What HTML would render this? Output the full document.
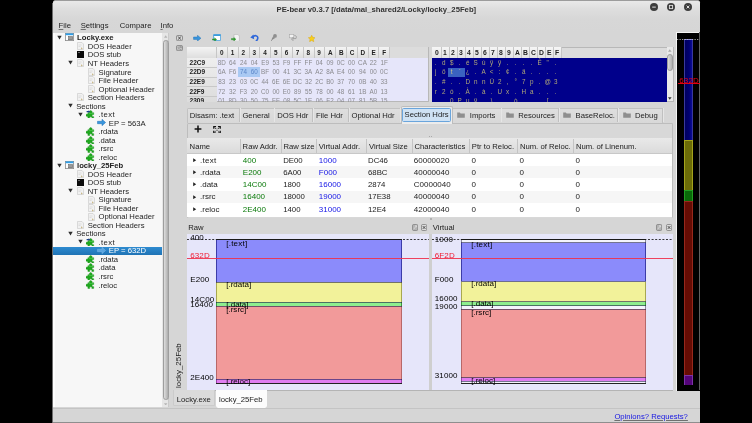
<!DOCTYPE html><html><head><meta charset='utf-8'><title>PE-bear</title><style>
*{box-sizing:border-box;margin:0;padding:0}
html,body{width:752px;height:423px;overflow:hidden;background:#000}
body{will-change:transform}
body{font-family:"Liberation Sans",sans-serif;font-size:7.7px;color:#1e1e1e;position:relative;line-height:1}
.a{position:absolute}
.t{position:absolute;white-space:nowrap;line-height:10px;height:10px}
.b{font-weight:bold}
u{text-decoration-color:rgba(30,30,30,.55);text-underline-offset:1px}
#win{position:absolute;left:52.6px;top:0.3px;width:647.3px;height:422.7px;border-top:0.7px solid #9c9c9c;background:#d6d6d6;border-radius:2.5px 2.5px 0 0;overflow:hidden}
#title{position:absolute;left:0;top:0;width:647px;height:31px;background:linear-gradient(#e9e9e9,#dedede 8px,#d7d7d7 18px,#d6d6d6)}
</style></head><body>
<div class='a' style='left:52px;top:3px;width:1px;height:420px;background:#6e6e6e'></div>
<div id='win'><div id='title'></div></div>
<div class='t b' style='left:276.6px;top:5px;color:#333'>PE-bear v0.3.7 [/data/mal_shared2/Locky/locky_25Feb]</div>
<svg class='a' style='left:650.1px;top:3.1px' width='8' height='8' viewBox='0 0 8 8'><circle cx='4' cy='4' r='4' fill='#3d3d3d'/><rect x='2.2' y='3.6' width='3.6' height='1' fill='#ddd'/></svg>
<svg class='a' style='left:667.0px;top:3.1px' width='8' height='8' viewBox='0 0 8 8'><circle cx='4' cy='4' r='4' fill='#3d3d3d'/><rect x='2.4' y='2.4' width='3.2' height='3.2' fill='none' stroke='#ddd' stroke-width='0.9'/></svg>
<svg class='a' style='left:684.0px;top:3.1px' width='8' height='8' viewBox='0 0 8 8'><circle cx='4' cy='4' r='4' fill='#3d3d3d'/><path d='M2.6 2.6L5.4 5.4M5.4 2.6L2.6 5.4' stroke='#ddd' stroke-width='1'/></svg>
<div class='t ' style='left:58.6px;top:21px;'><u>F</u>ile</div>
<div class='t ' style='left:80.7px;top:21px;'><u>S</u>ettings</div>
<div class='t ' style='left:119.8px;top:21px;'>Compare</div>
<div class='t ' style='left:160.5px;top:21px;'><u>I</u>nfo</div>
<div class='a' style='left:53.0px;top:32.8px;width:116.4px;height:374.7px;background:#f7f7f7;border-left:2px solid #fefefe'></div>
<div class='a' style='left:162.4px;top:32.8px;width:7.0px;height:374.7px;background:#e6e6e6;border-right:0.6px solid #c9c9c9'></div>
<div class='a' style='left:162.7px;top:40.2px;width:6.4px;height:360.0px;background:linear-gradient(90deg,#dedede,#cdcdcd 35%,#b6b6b6 85%,#a4a4a4);border-radius:2.8px;border:0.5px solid #9e9e9e'></div>
<svg class='a' style='left:164.2px;top:35.4px' width='3.4' height='2.8' viewBox='0 0 4 3'><path d='M0 3L2 0L4 3z' fill='#b5b5b5'/></svg>
<svg class='a' style='left:164.2px;top:402.6px' width='3.4' height='2.8' viewBox='0 0 4 3'><path d='M0 0L2 3L4 0z' fill='#b5b5b5'/></svg>
<svg class='a' style='left:57.0px;top:34.9px' width='5' height='5' viewBox='0 0 5 5'><path d='M0.3 0.8h4.4L2.5 4.4z' fill='#2e2e2e'/></svg>
<svg class='a' style='left:65.3px;top:33.2px' width='9' height='8' viewBox='0 0 9 8'><rect x='0.4' y='0.4' width='8.2' height='7.2' fill='#fdfdfd' stroke='#8a8a8a' stroke-width='0.8'/><rect x='0.6' y='0.4' width='7.8' height='1.8' fill='#2e9fea'/><rect x='3.6' y='3.6' width='4' height='3.2' fill='#9a9a9a' stroke='#555' stroke-width='0.5'/></svg>
<div class='t b' style='left:77.0px;top:33px;color:#222'>Locky.exe</div>
<svg class='a' style='left:77.0px;top:42.2px' width='7' height='8' viewBox='0 0 7 8'><path d='M0.5 0.5h4.5l1.5 1.5v5.5h-6z' fill='#f1f1f1' stroke='#cdcdcd' stroke-width='0.7'/><path d='M1.5 3h3M1.5 4.5h2' stroke='#d4d4d4' stroke-width='0.7'/><path d='M4 5.2l1.8 1.2l-1.8 1z' fill='#c9b98a'/></svg>
<div class='t ' style='left:87.7px;top:42px;'>DOS Header</div>
<svg class='a' style='left:77.0px;top:50.9px' width='7' height='7' viewBox='0 0 7 7'><rect width='7' height='7' fill='#0a0a0a'/><path d='M1 1.5h2' stroke='#aaa' stroke-width='0.6'/></svg>
<div class='t ' style='left:87.7px;top:50px;'>DOS stub</div>
<svg class='a' style='left:68.3px;top:60.4px' width='5' height='5' viewBox='0 0 5 5'><path d='M0.3 0.8h4.4L2.5 4.4z' fill='#2e2e2e'/></svg>
<svg class='a' style='left:77.0px;top:59.2px' width='7' height='8' viewBox='0 0 7 8'><path d='M0.5 0.5h4.5l1.5 1.5v5.5h-6z' fill='#f1f1f1' stroke='#cdcdcd' stroke-width='0.7'/><path d='M1.5 3h3M1.5 4.5h2' stroke='#d4d4d4' stroke-width='0.7'/><path d='M4 5.2l1.8 1.2l-1.8 1z' fill='#c9b98a'/></svg>
<div class='t ' style='left:87.7px;top:59px;'>NT Headers</div>
<svg class='a' style='left:88.0px;top:67.7px' width='7' height='8' viewBox='0 0 7 8'><path d='M0.5 0.5h4.5l1.5 1.5v5.5h-6z' fill='#f1f1f1' stroke='#cdcdcd' stroke-width='0.7'/><path d='M1.5 3h3M1.5 4.5h2' stroke='#d4d4d4' stroke-width='0.7'/><path d='M4 5.2l1.8 1.2l-1.8 1z' fill='#c9b98a'/></svg>
<div class='t ' style='left:98.6px;top:68px;'>Signature</div>
<svg class='a' style='left:88.0px;top:76.2px' width='7' height='8' viewBox='0 0 7 8'><path d='M0.5 0.5h4.5l1.5 1.5v5.5h-6z' fill='#f1f1f1' stroke='#cdcdcd' stroke-width='0.7'/><path d='M1.5 3h3M1.5 4.5h2' stroke='#d4d4d4' stroke-width='0.7'/><path d='M4 5.2l1.8 1.2l-1.8 1z' fill='#c9b98a'/></svg>
<div class='t ' style='left:98.6px;top:76px;'>File Header</div>
<svg class='a' style='left:88.0px;top:84.8px' width='7' height='8' viewBox='0 0 7 8'><path d='M0.5 0.5h4.5l1.5 1.5v5.5h-6z' fill='#f1f1f1' stroke='#cdcdcd' stroke-width='0.7'/><path d='M1.5 3h3M1.5 4.5h2' stroke='#d4d4d4' stroke-width='0.7'/><path d='M4 5.2l1.8 1.2l-1.8 1z' fill='#c9b98a'/></svg>
<div class='t ' style='left:98.6px;top:85px;'>Optional Header</div>
<svg class='a' style='left:77.0px;top:93.3px' width='7' height='8' viewBox='0 0 7 8'><path d='M0.5 0.5h4.5l1.5 1.5v5.5h-6z' fill='#f1f1f1' stroke='#cdcdcd' stroke-width='0.7'/><path d='M1.5 3h3M1.5 4.5h2' stroke='#d4d4d4' stroke-width='0.7'/><path d='M4 5.2l1.8 1.2l-1.8 1z' fill='#c9b98a'/></svg>
<div class='t ' style='left:87.7px;top:93px;'>Section Headers</div>
<svg class='a' style='left:68.3px;top:103.0px' width='5' height='5' viewBox='0 0 5 5'><path d='M0.3 0.8h4.4L2.5 4.4z' fill='#2e2e2e'/></svg>
<div class='t ' style='left:76.2px;top:102px;'>Sections</div>
<svg class='a' style='left:78.4px;top:111.5px' width='5' height='5' viewBox='0 0 5 5'><path d='M0.3 0.8h4.4L2.5 4.4z' fill='#2e2e2e'/></svg>
<svg class='a' style='left:86.4px;top:109.9px' width='8.4' height='8.6' viewBox='0 0 8.4 8.6'><path d='M1.9 2.7h1.7a1.35 1.35 0 1 1 2.2 0h1.9v1.9a1.1 1.1 0 1 0 0 2v1.8h-1.9a1.1 1.1 0 1 0 -2 0h-1.9v-2.2a1.25 1.25 0 1 1 0-1.9z' fill='#1fa81f' stroke='#128a12' stroke-width='0.4'/><path d='M2.6 3.4h4.2v1' stroke='#5fd45f' stroke-width='0.6' fill='none'/><path d='M0.6 1h2l0-0.8l1.6 1.4l-1.6 1.4v-0.8h-2z' fill='#1b3f8a'/></svg>
<div class='t ' style='left:98.4px;top:110px;letter-spacing:0.45px'>.text</div>
<svg class='a' style='left:97.3px;top:119.3px' width='9' height='7' viewBox='0 0 9 7'><path d='M0.5 2.3h4.5v-2l3.6 3.2l-3.6 3.2v-2h-4.5z' fill='#3a96dd' stroke='#1c6fb5' stroke-width='0.5'/></svg>
<div class='t ' style='left:108.8px;top:119px;'>EP = 563A</div>
<svg class='a' style='left:86.4px;top:127.0px' width='8.4' height='8.6' viewBox='0 0 8.4 8.6'><path d='M1.9 2.7h1.7a1.35 1.35 0 1 1 2.2 0h1.9v1.9a1.1 1.1 0 1 0 0 2v1.8h-1.9a1.1 1.1 0 1 0 -2 0h-1.9v-2.2a1.25 1.25 0 1 1 0-1.9z' fill='#1fa81f' stroke='#128a12' stroke-width='0.4'/><path d='M2.6 3.4h4.2v1' stroke='#5fd45f' stroke-width='0.6' fill='none'/></svg>
<div class='t ' style='left:98.4px;top:127px;'>.rdata</div>
<svg class='a' style='left:86.4px;top:135.5px' width='8.4' height='8.6' viewBox='0 0 8.4 8.6'><path d='M1.9 2.7h1.7a1.35 1.35 0 1 1 2.2 0h1.9v1.9a1.1 1.1 0 1 0 0 2v1.8h-1.9a1.1 1.1 0 1 0 -2 0h-1.9v-2.2a1.25 1.25 0 1 1 0-1.9z' fill='#1fa81f' stroke='#128a12' stroke-width='0.4'/><path d='M2.6 3.4h4.2v1' stroke='#5fd45f' stroke-width='0.6' fill='none'/></svg>
<div class='t ' style='left:98.4px;top:136px;'>.data</div>
<svg class='a' style='left:86.4px;top:144.0px' width='8.4' height='8.6' viewBox='0 0 8.4 8.6'><path d='M1.9 2.7h1.7a1.35 1.35 0 1 1 2.2 0h1.9v1.9a1.1 1.1 0 1 0 0 2v1.8h-1.9a1.1 1.1 0 1 0 -2 0h-1.9v-2.2a1.25 1.25 0 1 1 0-1.9z' fill='#1fa81f' stroke='#128a12' stroke-width='0.4'/><path d='M2.6 3.4h4.2v1' stroke='#5fd45f' stroke-width='0.6' fill='none'/></svg>
<div class='t ' style='left:98.4px;top:144px;'>.rsrc</div>
<svg class='a' style='left:86.4px;top:152.5px' width='8.4' height='8.6' viewBox='0 0 8.4 8.6'><path d='M1.9 2.7h1.7a1.35 1.35 0 1 1 2.2 0h1.9v1.9a1.1 1.1 0 1 0 0 2v1.8h-1.9a1.1 1.1 0 1 0 -2 0h-1.9v-2.2a1.25 1.25 0 1 1 0-1.9z' fill='#1fa81f' stroke='#128a12' stroke-width='0.4'/><path d='M2.6 3.4h4.2v1' stroke='#5fd45f' stroke-width='0.6' fill='none'/></svg>
<div class='t ' style='left:98.4px;top:153px;'>.reloc</div>
<svg class='a' style='left:57.0px;top:162.6px' width='5' height='5' viewBox='0 0 5 5'><path d='M0.3 0.8h4.4L2.5 4.4z' fill='#2e2e2e'/></svg>
<svg class='a' style='left:65.3px;top:161.0px' width='9' height='8' viewBox='0 0 9 8'><rect x='0.4' y='0.4' width='8.2' height='7.2' fill='#fdfdfd' stroke='#8a8a8a' stroke-width='0.8'/><rect x='0.6' y='0.4' width='7.8' height='1.8' fill='#2e9fea'/><rect x='3.6' y='3.6' width='4' height='3.2' fill='#9a9a9a' stroke='#555' stroke-width='0.5'/></svg>
<div class='t b' style='left:77.0px;top:161px;color:#222'>locky_25Feb</div>
<svg class='a' style='left:77.0px;top:170.0px' width='7' height='8' viewBox='0 0 7 8'><path d='M0.5 0.5h4.5l1.5 1.5v5.5h-6z' fill='#f1f1f1' stroke='#cdcdcd' stroke-width='0.7'/><path d='M1.5 3h3M1.5 4.5h2' stroke='#d4d4d4' stroke-width='0.7'/><path d='M4 5.2l1.8 1.2l-1.8 1z' fill='#c9b98a'/></svg>
<div class='t ' style='left:87.7px;top:170px;'>DOS Header</div>
<svg class='a' style='left:77.0px;top:178.7px' width='7' height='7' viewBox='0 0 7 7'><rect width='7' height='7' fill='#0a0a0a'/><path d='M1 1.5h2' stroke='#aaa' stroke-width='0.6'/></svg>
<div class='t ' style='left:87.7px;top:178px;'>DOS stub</div>
<svg class='a' style='left:68.3px;top:188.2px' width='5' height='5' viewBox='0 0 5 5'><path d='M0.3 0.8h4.4L2.5 4.4z' fill='#2e2e2e'/></svg>
<svg class='a' style='left:77.0px;top:187.0px' width='7' height='8' viewBox='0 0 7 8'><path d='M0.5 0.5h4.5l1.5 1.5v5.5h-6z' fill='#f1f1f1' stroke='#cdcdcd' stroke-width='0.7'/><path d='M1.5 3h3M1.5 4.5h2' stroke='#d4d4d4' stroke-width='0.7'/><path d='M4 5.2l1.8 1.2l-1.8 1z' fill='#c9b98a'/></svg>
<div class='t ' style='left:87.7px;top:187px;'>NT Headers</div>
<svg class='a' style='left:88.0px;top:195.5px' width='7' height='8' viewBox='0 0 7 8'><path d='M0.5 0.5h4.5l1.5 1.5v5.5h-6z' fill='#f1f1f1' stroke='#cdcdcd' stroke-width='0.7'/><path d='M1.5 3h3M1.5 4.5h2' stroke='#d4d4d4' stroke-width='0.7'/><path d='M4 5.2l1.8 1.2l-1.8 1z' fill='#c9b98a'/></svg>
<div class='t ' style='left:98.6px;top:195px;'>Signature</div>
<svg class='a' style='left:88.0px;top:204.0px' width='7' height='8' viewBox='0 0 7 8'><path d='M0.5 0.5h4.5l1.5 1.5v5.5h-6z' fill='#f1f1f1' stroke='#cdcdcd' stroke-width='0.7'/><path d='M1.5 3h3M1.5 4.5h2' stroke='#d4d4d4' stroke-width='0.7'/><path d='M4 5.2l1.8 1.2l-1.8 1z' fill='#c9b98a'/></svg>
<div class='t ' style='left:98.6px;top:204px;'>File Header</div>
<svg class='a' style='left:88.0px;top:212.6px' width='7' height='8' viewBox='0 0 7 8'><path d='M0.5 0.5h4.5l1.5 1.5v5.5h-6z' fill='#f1f1f1' stroke='#cdcdcd' stroke-width='0.7'/><path d='M1.5 3h3M1.5 4.5h2' stroke='#d4d4d4' stroke-width='0.7'/><path d='M4 5.2l1.8 1.2l-1.8 1z' fill='#c9b98a'/></svg>
<div class='t ' style='left:98.6px;top:212px;'>Optional Header</div>
<svg class='a' style='left:77.0px;top:221.1px' width='7' height='8' viewBox='0 0 7 8'><path d='M0.5 0.5h4.5l1.5 1.5v5.5h-6z' fill='#f1f1f1' stroke='#cdcdcd' stroke-width='0.7'/><path d='M1.5 3h3M1.5 4.5h2' stroke='#d4d4d4' stroke-width='0.7'/><path d='M4 5.2l1.8 1.2l-1.8 1z' fill='#c9b98a'/></svg>
<div class='t ' style='left:87.7px;top:221px;'>Section Headers</div>
<svg class='a' style='left:68.3px;top:230.8px' width='5' height='5' viewBox='0 0 5 5'><path d='M0.3 0.8h4.4L2.5 4.4z' fill='#2e2e2e'/></svg>
<div class='t ' style='left:76.2px;top:229px;'>Sections</div>
<svg class='a' style='left:78.4px;top:239.3px' width='5' height='5' viewBox='0 0 5 5'><path d='M0.3 0.8h4.4L2.5 4.4z' fill='#2e2e2e'/></svg>
<svg class='a' style='left:86.4px;top:237.7px' width='8.4' height='8.6' viewBox='0 0 8.4 8.6'><path d='M1.9 2.7h1.7a1.35 1.35 0 1 1 2.2 0h1.9v1.9a1.1 1.1 0 1 0 0 2v1.8h-1.9a1.1 1.1 0 1 0 -2 0h-1.9v-2.2a1.25 1.25 0 1 1 0-1.9z' fill='#1fa81f' stroke='#128a12' stroke-width='0.4'/><path d='M2.6 3.4h4.2v1' stroke='#5fd45f' stroke-width='0.6' fill='none'/><path d='M0.6 1h2l0-0.8l1.6 1.4l-1.6 1.4v-0.8h-2z' fill='#1b3f8a'/></svg>
<div class='t ' style='left:98.4px;top:238px;letter-spacing:0.45px'>.text</div>
<div class='a' style='left:53.0px;top:246.5px;width:109.4px;height:8.2px;background:linear-gradient(#2e8bd0,#1f73b5)'></div>
<svg class='a' style='left:97.3px;top:247.2px' width='9' height='7' viewBox='0 0 9 7'><path d='M0.5 2.3h4.5v-2l3.6 3.2l-3.6 3.2v-2h-4.5z' fill='#5aa5e0' stroke='#7fb8e8' stroke-width='0.5'/></svg>
<div class='t ' style='left:108.8px;top:246px;color:#fff'>EP = 632D</div>
<svg class='a' style='left:86.4px;top:254.8px' width='8.4' height='8.6' viewBox='0 0 8.4 8.6'><path d='M1.9 2.7h1.7a1.35 1.35 0 1 1 2.2 0h1.9v1.9a1.1 1.1 0 1 0 0 2v1.8h-1.9a1.1 1.1 0 1 0 -2 0h-1.9v-2.2a1.25 1.25 0 1 1 0-1.9z' fill='#1fa81f' stroke='#128a12' stroke-width='0.4'/><path d='M2.6 3.4h4.2v1' stroke='#5fd45f' stroke-width='0.6' fill='none'/></svg>
<div class='t ' style='left:98.4px;top:255px;'>.rdata</div>
<svg class='a' style='left:86.4px;top:263.3px' width='8.4' height='8.6' viewBox='0 0 8.4 8.6'><path d='M1.9 2.7h1.7a1.35 1.35 0 1 1 2.2 0h1.9v1.9a1.1 1.1 0 1 0 0 2v1.8h-1.9a1.1 1.1 0 1 0 -2 0h-1.9v-2.2a1.25 1.25 0 1 1 0-1.9z' fill='#1fa81f' stroke='#128a12' stroke-width='0.4'/><path d='M2.6 3.4h4.2v1' stroke='#5fd45f' stroke-width='0.6' fill='none'/></svg>
<div class='t ' style='left:98.4px;top:263px;'>.data</div>
<svg class='a' style='left:86.4px;top:271.8px' width='8.4' height='8.6' viewBox='0 0 8.4 8.6'><path d='M1.9 2.7h1.7a1.35 1.35 0 1 1 2.2 0h1.9v1.9a1.1 1.1 0 1 0 0 2v1.8h-1.9a1.1 1.1 0 1 0 -2 0h-1.9v-2.2a1.25 1.25 0 1 1 0-1.9z' fill='#1fa81f' stroke='#128a12' stroke-width='0.4'/><path d='M2.6 3.4h4.2v1' stroke='#5fd45f' stroke-width='0.6' fill='none'/></svg>
<div class='t ' style='left:98.4px;top:272px;'>.rsrc</div>
<svg class='a' style='left:86.4px;top:280.3px' width='8.4' height='8.6' viewBox='0 0 8.4 8.6'><path d='M1.9 2.7h1.7a1.35 1.35 0 1 1 2.2 0h1.9v1.9a1.1 1.1 0 1 0 0 2v1.8h-1.9a1.1 1.1 0 1 0 -2 0h-1.9v-2.2a1.25 1.25 0 1 1 0-1.9z' fill='#1fa81f' stroke='#128a12' stroke-width='0.4'/><path d='M2.6 3.4h4.2v1' stroke='#5fd45f' stroke-width='0.6' fill='none'/></svg>
<div class='t ' style='left:98.4px;top:281px;'>.reloc</div>
<svg class='a' style='left:176.1px;top:34.8px' width='7' height='6.2' viewBox='0 0 7 6.2'><rect x='0.45' y='0.45' width='6.1' height='5.3' rx='1.3' fill='#dadada' stroke='#7a7a7a' stroke-width='0.8'/><path d='M2.1 1.5L4.9 4.7M4.9 1.5L2.1 4.7' stroke='#4c4c4c' stroke-width='1'/></svg>
<svg class='a' style='left:176.1px;top:44.9px' width='7' height='6.2' viewBox='0 0 7 6.2'><rect x='0.45' y='0.45' width='6.1' height='5.3' rx='1.3' fill='#c6c6c6' stroke='#7e7e7e' stroke-width='0.8'/><path d='M1.6 4.4L5.2 1.8M3.4 1.7h1.9v1.4M1.5 2.2h1.6M3.6 4.5h1.8' stroke='#8a8a8a' stroke-width='0.7' fill='none'/></svg>
<svg class='a' style='left:192.8px;top:34.6px' width='8.4' height='6.4' viewBox='0 0 9 7'><path d='M0.5 2.2h4.3v-1.9l3.8 3.2l-3.8 3.2v-1.9h-4.3z' fill='#3a96dd' stroke='#1c6fb5' stroke-width='0.5'/></svg>
<svg class='a' style='left:211.6px;top:33.8px' width='9' height='7.6' viewBox='0 0 9 7.6'><rect x='1.6' y='0.4' width='7' height='6.2' rx='0.6' fill='#fff' stroke='#3b9bdc' stroke-width='0.8'/><rect x='1.6' y='0.4' width='7' height='1.6' fill='#3b9bdc'/><path d='M0.3 4.9h2.3v-1.2l2.1 1.8l-2.1 1.8v-1.2h-2.3z' fill='#2e9e2e' stroke='#1c7a1c' stroke-width='0.3'/></svg>
<svg class='a' style='left:230.6px;top:33.8px' width='9' height='7.6' viewBox='0 0 9 7.6'><path d='M3 0.4h3.8l1.6 1.6v5.2h-5.4z' fill='#f4f4f4' stroke='#b5b5b5' stroke-width='0.6'/><path d='M0.3 4.6h2.5v-1.2l2.2 1.8l-2.2 1.8v-1.2h-2.5z' fill='#2e9e2e' stroke='#1c7a1c' stroke-width='0.3'/></svg>
<svg class='a' style='left:249.6px;top:33.8px' width='9' height='7.6' viewBox='0 0 9 7.6'><path d='M3 3.1C4.2 0.9 8.2 1.2 7.8 4.2C7.6 5.6 7 6.4 6.3 6.9' stroke='#2f68da' stroke-width='1.6' fill='none' stroke-linecap='round'/><path d='M0.3 3.6L3.4 0.6L4.2 5.2z' fill='#2f68da'/></svg>
<svg class='a' style='left:270.6px;top:34.2px' width='6' height='7' viewBox='0 0 6 7'><circle cx='4' cy='1.9' r='1.9' fill='#8f8f8f'/><path d='M2.3 2l2 1.9l-2.6 1.7l-0.9-0.9z' fill='#8f8f8f'/><path d='M1.9 4.4l-1.6 2.4' stroke='#858585' stroke-width='0.9'/></svg>
<svg class='a' style='left:289px;top:34.4px' width='8' height='6.6' viewBox='0 0 8 6.6'><rect x='0.4' y='0.4' width='4.4' height='3.4' fill='#f2f2f2' stroke='#a8a8a8' stroke-width='0.6'/><path d='M5.4 1.4c1.8 0 2.4 1.4 1.6 3.2h-2.8v-1.1l-1.8 1.6l1.8 1.4v-1' fill='none' stroke='#8e8e8e' stroke-width='0.7'/></svg>
<svg class='a' style='left:307.8px;top:34.8px' width='7.4' height='6.8' viewBox='0 0 10 9.5'><path d='M5 0.3l1.45 3l3.3 0.45l-2.4 2.3l0.6 3.25l-2.95-1.55l-2.95 1.55l0.6-3.25l-2.4-2.3l3.3-0.45z' fill='#f7cf1d' stroke='#d9a40c' stroke-width='0.6'/></svg>
<div class='a' style='left:186.6px;top:46.6px;width:242.0px;height:55.4px;background:#e6e6fa;border:0.6px solid #b8b8b8'></div>
<div class='a' style='left:187.1px;top:47.1px;width:241.0px;height:10.6px;background:#dcdcdc'></div>
<div class='a' style='left:187.1px;top:47.1px;width:203.0px;height:10.6px;background:linear-gradient(#f4f4f4,#dedede);'></div>
<div class='a' style='left:187.1px;top:57.6px;width:29.6px;height:44.0px;background:linear-gradient(#eeeeee,#dcdcdc)'></div>
<div class='a' style='left:216.1px;top:47.1px;width:0.6px;height:10.6px;background:#c6c6c6'></div>
<div class='t b' style='left:219.9px;top:48px;color:#222;font-size:6.4px'>0</div>
<div class='a' style='left:226.9px;top:47.1px;width:0.6px;height:10.6px;background:#c6c6c6'></div>
<div class='t b' style='left:230.7px;top:48px;color:#222;font-size:6.4px'>1</div>
<div class='a' style='left:237.7px;top:47.1px;width:0.6px;height:10.6px;background:#c6c6c6'></div>
<div class='t b' style='left:241.6px;top:48px;color:#222;font-size:6.4px'>2</div>
<div class='a' style='left:248.6px;top:47.1px;width:0.6px;height:10.6px;background:#c6c6c6'></div>
<div class='t b' style='left:252.4px;top:48px;color:#222;font-size:6.4px'>3</div>
<div class='a' style='left:259.4px;top:47.1px;width:0.6px;height:10.6px;background:#c6c6c6'></div>
<div class='t b' style='left:263.2px;top:48px;color:#222;font-size:6.4px'>4</div>
<div class='a' style='left:270.2px;top:47.1px;width:0.6px;height:10.6px;background:#c6c6c6'></div>
<div class='t b' style='left:274.0px;top:48px;color:#222;font-size:6.4px'>5</div>
<div class='a' style='left:281.0px;top:47.1px;width:0.6px;height:10.6px;background:#c6c6c6'></div>
<div class='t b' style='left:284.8px;top:48px;color:#222;font-size:6.4px'>6</div>
<div class='a' style='left:291.8px;top:47.1px;width:0.6px;height:10.6px;background:#c6c6c6'></div>
<div class='t b' style='left:295.7px;top:48px;color:#222;font-size:6.4px'>7</div>
<div class='a' style='left:302.7px;top:47.1px;width:0.6px;height:10.6px;background:#c6c6c6'></div>
<div class='t b' style='left:306.5px;top:48px;color:#222;font-size:6.4px'>8</div>
<div class='a' style='left:313.5px;top:47.1px;width:0.6px;height:10.6px;background:#c6c6c6'></div>
<div class='t b' style='left:317.3px;top:48px;color:#222;font-size:6.4px'>9</div>
<div class='a' style='left:324.3px;top:47.1px;width:0.6px;height:10.6px;background:#c6c6c6'></div>
<div class='t b' style='left:328.1px;top:48px;color:#222;font-size:6.4px'>A</div>
<div class='a' style='left:335.1px;top:47.1px;width:0.6px;height:10.6px;background:#c6c6c6'></div>
<div class='t b' style='left:338.9px;top:48px;color:#222;font-size:6.4px'>B</div>
<div class='a' style='left:345.9px;top:47.1px;width:0.6px;height:10.6px;background:#c6c6c6'></div>
<div class='t b' style='left:349.8px;top:48px;color:#222;font-size:6.4px'>C</div>
<div class='a' style='left:356.8px;top:47.1px;width:0.6px;height:10.6px;background:#c6c6c6'></div>
<div class='t b' style='left:360.6px;top:48px;color:#222;font-size:6.4px'>D</div>
<div class='a' style='left:367.6px;top:47.1px;width:0.6px;height:10.6px;background:#c6c6c6'></div>
<div class='t b' style='left:371.4px;top:48px;color:#222;font-size:6.4px'>E</div>
<div class='a' style='left:378.4px;top:47.1px;width:0.6px;height:10.6px;background:#c6c6c6'></div>
<div class='t b' style='left:382.2px;top:48px;color:#222;font-size:6.4px'>F</div>
<div class='a' style='left:389.2px;top:47.1px;width:0.6px;height:10.6px;background:#c6c6c6'></div>
<div class='a' style='left:186.6px;top:46.6px;width:242px;height:55.4px;overflow:hidden'>
<div class='t b' style='left:3px;top:11.4px;color:#222;font-size:6.5px'>22C9</div>
<div class='t' style='left:29.8px;width:10.8px;text-align:center;top:11.4px;color:#8a8a8e;font-size:6.3px'>8D</div>
<div class='t' style='left:40.6px;width:10.8px;text-align:center;top:11.4px;color:#8a8a8e;font-size:6.3px'>64</div>
<div class='t' style='left:51.4px;width:10.8px;text-align:center;top:11.4px;color:#8a8a8e;font-size:6.3px'>24</div>
<div class='t' style='left:62.3px;width:10.8px;text-align:center;top:11.4px;color:#8a8a8e;font-size:6.3px'>04</div>
<div class='t' style='left:73.1px;width:10.8px;text-align:center;top:11.4px;color:#8a8a8e;font-size:6.3px'>E9</div>
<div class='t' style='left:83.9px;width:10.8px;text-align:center;top:11.4px;color:#8a8a8e;font-size:6.3px'>53</div>
<div class='t' style='left:94.7px;width:10.8px;text-align:center;top:11.4px;color:#8a8a8e;font-size:6.3px'>F9</div>
<div class='t' style='left:105.5px;width:10.8px;text-align:center;top:11.4px;color:#8a8a8e;font-size:6.3px'>FF</div>
<div class='t' style='left:116.4px;width:10.8px;text-align:center;top:11.4px;color:#8a8a8e;font-size:6.3px'>FF</div>
<div class='t' style='left:127.2px;width:10.8px;text-align:center;top:11.4px;color:#8a8a8e;font-size:6.3px'>04</div>
<div class='t' style='left:138.0px;width:10.8px;text-align:center;top:11.4px;color:#8a8a8e;font-size:6.3px'>09</div>
<div class='t' style='left:148.8px;width:10.8px;text-align:center;top:11.4px;color:#8a8a8e;font-size:6.3px'>0C</div>
<div class='t' style='left:159.6px;width:10.8px;text-align:center;top:11.4px;color:#8a8a8e;font-size:6.3px'>00</div>
<div class='t' style='left:170.5px;width:10.8px;text-align:center;top:11.4px;color:#8a8a8e;font-size:6.3px'>CA</div>
<div class='t' style='left:181.3px;width:10.8px;text-align:center;top:11.4px;color:#8a8a8e;font-size:6.3px'>22</div>
<div class='t' style='left:192.1px;width:10.8px;text-align:center;top:11.4px;color:#8a8a8e;font-size:6.3px'>1F</div>
<div class='a' style='left:0.5px;top:20.4px;width:29.6px;height:0.6px;background:#c8c8c8'></div>
<div class='t b' style='left:3px;top:20.4px;color:#222;font-size:6.5px'>22D9</div>
<div class='t' style='left:29.8px;width:10.8px;text-align:center;top:20.4px;color:#8a8a8e;font-size:6.3px'>6A</div>
<div class='t' style='left:40.6px;width:10.8px;text-align:center;top:20.4px;color:#8a8a8e;font-size:6.3px'>F6</div>
<div class='a' style='left:51.4px;top:20.7px;width:10.8px;height:9.6px;background:#a9c9f3'></div>
<div class='t' style='left:51.4px;width:10.8px;text-align:center;top:20.4px;color:#5c86c8;font-size:6.3px'>74</div>
<div class='a' style='left:62.3px;top:20.7px;width:10.8px;height:9.6px;background:#a9c9f3'></div>
<div class='t' style='left:62.3px;width:10.8px;text-align:center;top:20.4px;color:#5c86c8;font-size:6.3px'>60</div>
<div class='t' style='left:73.1px;width:10.8px;text-align:center;top:20.4px;color:#8a8a8e;font-size:6.3px'>BF</div>
<div class='t' style='left:83.9px;width:10.8px;text-align:center;top:20.4px;color:#8a8a8e;font-size:6.3px'>00</div>
<div class='t' style='left:94.7px;width:10.8px;text-align:center;top:20.4px;color:#8a8a8e;font-size:6.3px'>41</div>
<div class='t' style='left:105.5px;width:10.8px;text-align:center;top:20.4px;color:#8a8a8e;font-size:6.3px'>3C</div>
<div class='t' style='left:116.4px;width:10.8px;text-align:center;top:20.4px;color:#8a8a8e;font-size:6.3px'>3A</div>
<div class='t' style='left:127.2px;width:10.8px;text-align:center;top:20.4px;color:#8a8a8e;font-size:6.3px'>A2</div>
<div class='t' style='left:138.0px;width:10.8px;text-align:center;top:20.4px;color:#8a8a8e;font-size:6.3px'>8A</div>
<div class='t' style='left:148.8px;width:10.8px;text-align:center;top:20.4px;color:#8a8a8e;font-size:6.3px'>E4</div>
<div class='t' style='left:159.6px;width:10.8px;text-align:center;top:20.4px;color:#8a8a8e;font-size:6.3px'>00</div>
<div class='t' style='left:170.5px;width:10.8px;text-align:center;top:20.4px;color:#8a8a8e;font-size:6.3px'>94</div>
<div class='t' style='left:181.3px;width:10.8px;text-align:center;top:20.4px;color:#8a8a8e;font-size:6.3px'>00</div>
<div class='t' style='left:192.1px;width:10.8px;text-align:center;top:20.4px;color:#8a8a8e;font-size:6.3px'>0C</div>
<div class='a' style='left:0.5px;top:30.0px;width:29.6px;height:0.6px;background:#c8c8c8'></div>
<div class='t b' style='left:3px;top:30.4px;color:#222;font-size:6.5px'>22E9</div>
<div class='t' style='left:29.8px;width:10.8px;text-align:center;top:30.4px;color:#8a8a8e;font-size:6.3px'>83</div>
<div class='t' style='left:40.6px;width:10.8px;text-align:center;top:30.4px;color:#8a8a8e;font-size:6.3px'>23</div>
<div class='t' style='left:51.4px;width:10.8px;text-align:center;top:30.4px;color:#8a8a8e;font-size:6.3px'>03</div>
<div class='t' style='left:62.3px;width:10.8px;text-align:center;top:30.4px;color:#8a8a8e;font-size:6.3px'>0C</div>
<div class='t' style='left:73.1px;width:10.8px;text-align:center;top:30.4px;color:#8a8a8e;font-size:6.3px'>44</div>
<div class='t' style='left:83.9px;width:10.8px;text-align:center;top:30.4px;color:#8a8a8e;font-size:6.3px'>6E</div>
<div class='t' style='left:94.7px;width:10.8px;text-align:center;top:30.4px;color:#8a8a8e;font-size:6.3px'>6E</div>
<div class='t' style='left:105.5px;width:10.8px;text-align:center;top:30.4px;color:#8a8a8e;font-size:6.3px'>DC</div>
<div class='t' style='left:116.4px;width:10.8px;text-align:center;top:30.4px;color:#8a8a8e;font-size:6.3px'>32</div>
<div class='t' style='left:127.2px;width:10.8px;text-align:center;top:30.4px;color:#8a8a8e;font-size:6.3px'>2C</div>
<div class='t' style='left:138.0px;width:10.8px;text-align:center;top:30.4px;color:#8a8a8e;font-size:6.3px'>B0</div>
<div class='t' style='left:148.8px;width:10.8px;text-align:center;top:30.4px;color:#8a8a8e;font-size:6.3px'>37</div>
<div class='t' style='left:159.6px;width:10.8px;text-align:center;top:30.4px;color:#8a8a8e;font-size:6.3px'>70</div>
<div class='t' style='left:170.5px;width:10.8px;text-align:center;top:30.4px;color:#8a8a8e;font-size:6.3px'>0B</div>
<div class='t' style='left:181.3px;width:10.8px;text-align:center;top:30.4px;color:#8a8a8e;font-size:6.3px'>40</div>
<div class='t' style='left:192.1px;width:10.8px;text-align:center;top:30.4px;color:#8a8a8e;font-size:6.3px'>33</div>
<div class='a' style='left:0.5px;top:39.6px;width:29.6px;height:0.6px;background:#c8c8c8'></div>
<div class='t b' style='left:3px;top:40.4px;color:#222;font-size:6.5px'>22F9</div>
<div class='t' style='left:29.8px;width:10.8px;text-align:center;top:40.4px;color:#8a8a8e;font-size:6.3px'>72</div>
<div class='t' style='left:40.6px;width:10.8px;text-align:center;top:40.4px;color:#8a8a8e;font-size:6.3px'>32</div>
<div class='t' style='left:51.4px;width:10.8px;text-align:center;top:40.4px;color:#8a8a8e;font-size:6.3px'>F3</div>
<div class='t' style='left:62.3px;width:10.8px;text-align:center;top:40.4px;color:#8a8a8e;font-size:6.3px'>20</div>
<div class='t' style='left:73.1px;width:10.8px;text-align:center;top:40.4px;color:#8a8a8e;font-size:6.3px'>C0</div>
<div class='t' style='left:83.9px;width:10.8px;text-align:center;top:40.4px;color:#8a8a8e;font-size:6.3px'>00</div>
<div class='t' style='left:94.7px;width:10.8px;text-align:center;top:40.4px;color:#8a8a8e;font-size:6.3px'>E0</div>
<div class='t' style='left:105.5px;width:10.8px;text-align:center;top:40.4px;color:#8a8a8e;font-size:6.3px'>89</div>
<div class='t' style='left:116.4px;width:10.8px;text-align:center;top:40.4px;color:#8a8a8e;font-size:6.3px'>55</div>
<div class='t' style='left:127.2px;width:10.8px;text-align:center;top:40.4px;color:#8a8a8e;font-size:6.3px'>78</div>
<div class='t' style='left:138.0px;width:10.8px;text-align:center;top:40.4px;color:#8a8a8e;font-size:6.3px'>00</div>
<div class='t' style='left:148.8px;width:10.8px;text-align:center;top:40.4px;color:#8a8a8e;font-size:6.3px'>48</div>
<div class='t' style='left:159.6px;width:10.8px;text-align:center;top:40.4px;color:#8a8a8e;font-size:6.3px'>61</div>
<div class='t' style='left:170.5px;width:10.8px;text-align:center;top:40.4px;color:#8a8a8e;font-size:6.3px'>1B</div>
<div class='t' style='left:181.3px;width:10.8px;text-align:center;top:40.4px;color:#8a8a8e;font-size:6.3px'>A0</div>
<div class='t' style='left:192.1px;width:10.8px;text-align:center;top:40.4px;color:#8a8a8e;font-size:6.3px'>13</div>
<div class='a' style='left:0.5px;top:49.1px;width:29.6px;height:0.6px;background:#c8c8c8'></div>
<div class='t b' style='left:3px;top:49.4px;color:#222;font-size:6.5px'>2309</div>
<div class='t' style='left:29.8px;width:10.8px;text-align:center;top:49.4px;color:#8a8a8e;font-size:6.3px'>01</div>
<div class='t' style='left:40.6px;width:10.8px;text-align:center;top:49.4px;color:#8a8a8e;font-size:6.3px'>8D</div>
<div class='t' style='left:51.4px;width:10.8px;text-align:center;top:49.4px;color:#8a8a8e;font-size:6.3px'>30</div>
<div class='t' style='left:62.3px;width:10.8px;text-align:center;top:49.4px;color:#8a8a8e;font-size:6.3px'>50</div>
<div class='t' style='left:73.1px;width:10.8px;text-align:center;top:49.4px;color:#8a8a8e;font-size:6.3px'>75</div>
<div class='t' style='left:83.9px;width:10.8px;text-align:center;top:49.4px;color:#8a8a8e;font-size:6.3px'>FF</div>
<div class='t' style='left:94.7px;width:10.8px;text-align:center;top:49.4px;color:#8a8a8e;font-size:6.3px'>08</div>
<div class='t' style='left:105.5px;width:10.8px;text-align:center;top:49.4px;color:#8a8a8e;font-size:6.3px'>5C</div>
<div class='t' style='left:116.4px;width:10.8px;text-align:center;top:49.4px;color:#8a8a8e;font-size:6.3px'>1E</div>
<div class='t' style='left:127.2px;width:10.8px;text-align:center;top:49.4px;color:#8a8a8e;font-size:6.3px'>06</div>
<div class='t' style='left:138.0px;width:10.8px;text-align:center;top:49.4px;color:#8a8a8e;font-size:6.3px'>F2</div>
<div class='t' style='left:148.8px;width:10.8px;text-align:center;top:49.4px;color:#8a8a8e;font-size:6.3px'>04</div>
<div class='t' style='left:159.6px;width:10.8px;text-align:center;top:49.4px;color:#8a8a8e;font-size:6.3px'>07</div>
<div class='t' style='left:170.5px;width:10.8px;text-align:center;top:49.4px;color:#8a8a8e;font-size:6.3px'>81</div>
<div class='t' style='left:181.3px;width:10.8px;text-align:center;top:49.4px;color:#8a8a8e;font-size:6.3px'>5B</div>
<div class='t' style='left:192.1px;width:10.8px;text-align:center;top:49.4px;color:#8a8a8e;font-size:6.3px'>15</div>
</div>
<div class='a' style='left:431.8px;top:46.6px;width:242.0px;height:55.4px;background:#dcdcdc;border:0.6px solid #b8b8b8'></div>
<div class='a' style='left:432.3px;top:58.0px;width:234.6px;height:44.0px;background:#00008b'></div>
<div class='a' style='left:432.3px;top:47.1px;width:129.4px;height:10.8px;background:linear-gradient(#f6f6f6,#e2e2e2)'></div>
<div class='a' style='left:440.9px;top:47.1px;width:0.6px;height:10.6px;background:#c6c6c6'></div>
<div class='t b' style='left:435.1px;top:48px;color:#222;font-size:6.8px'>0</div>
<div class='a' style='left:448.9px;top:47.1px;width:0.6px;height:10.6px;background:#c6c6c6'></div>
<div class='t b' style='left:443.1px;top:48px;color:#222;font-size:6.8px'>1</div>
<div class='a' style='left:456.9px;top:47.1px;width:0.6px;height:10.6px;background:#c6c6c6'></div>
<div class='t b' style='left:451.1px;top:48px;color:#222;font-size:6.8px'>2</div>
<div class='a' style='left:464.9px;top:47.1px;width:0.6px;height:10.6px;background:#c6c6c6'></div>
<div class='t b' style='left:459.1px;top:48px;color:#222;font-size:6.8px'>3</div>
<div class='a' style='left:472.9px;top:47.1px;width:0.6px;height:10.6px;background:#c6c6c6'></div>
<div class='t b' style='left:467.1px;top:48px;color:#222;font-size:6.8px'>4</div>
<div class='a' style='left:480.9px;top:47.1px;width:0.6px;height:10.6px;background:#c6c6c6'></div>
<div class='t b' style='left:475.1px;top:48px;color:#222;font-size:6.8px'>5</div>
<div class='a' style='left:488.9px;top:47.1px;width:0.6px;height:10.6px;background:#c6c6c6'></div>
<div class='t b' style='left:483.1px;top:48px;color:#222;font-size:6.8px'>6</div>
<div class='a' style='left:496.9px;top:47.1px;width:0.6px;height:10.6px;background:#c6c6c6'></div>
<div class='t b' style='left:491.1px;top:48px;color:#222;font-size:6.8px'>7</div>
<div class='a' style='left:504.9px;top:47.1px;width:0.6px;height:10.6px;background:#c6c6c6'></div>
<div class='t b' style='left:499.1px;top:48px;color:#222;font-size:6.8px'>8</div>
<div class='a' style='left:512.9px;top:47.1px;width:0.6px;height:10.6px;background:#c6c6c6'></div>
<div class='t b' style='left:507.1px;top:48px;color:#222;font-size:6.8px'>9</div>
<div class='a' style='left:520.9px;top:47.1px;width:0.6px;height:10.6px;background:#c6c6c6'></div>
<div class='t b' style='left:515.1px;top:48px;color:#222;font-size:6.8px'>A</div>
<div class='a' style='left:528.9px;top:47.1px;width:0.6px;height:10.6px;background:#c6c6c6'></div>
<div class='t b' style='left:523.1px;top:48px;color:#222;font-size:6.8px'>B</div>
<div class='a' style='left:536.9px;top:47.1px;width:0.6px;height:10.6px;background:#c6c6c6'></div>
<div class='t b' style='left:531.1px;top:48px;color:#222;font-size:6.8px'>C</div>
<div class='a' style='left:544.9px;top:47.1px;width:0.6px;height:10.6px;background:#c6c6c6'></div>
<div class='t b' style='left:539.1px;top:48px;color:#222;font-size:6.8px'>D</div>
<div class='a' style='left:552.9px;top:47.1px;width:0.6px;height:10.6px;background:#c6c6c6'></div>
<div class='t b' style='left:547.1px;top:48px;color:#222;font-size:6.8px'>E</div>
<div class='a' style='left:560.9px;top:47.1px;width:0.6px;height:10.6px;background:#c6c6c6'></div>
<div class='t b' style='left:555.1px;top:48px;color:#222;font-size:6.8px'>F</div>
<div class='a' style='left:431.8px;top:46.6px;width:235px;height:55.4px;overflow:hidden'>
<div class='t' style='left:-0.1px;width:8.0px;text-align:center;top:11.4px;color:#b0a878;font-size:6.3px'>.</div>
<div class='t' style='left:7.9px;width:8.0px;text-align:center;top:11.4px;color:#b0a878;font-size:6.3px'>d</div>
<div class='t' style='left:15.9px;width:8.0px;text-align:center;top:11.4px;color:#b0a878;font-size:6.3px'>$</div>
<div class='t' style='left:23.9px;width:8.0px;text-align:center;top:11.4px;color:#b0a878;font-size:6.3px'>.</div>
<div class='t' style='left:31.9px;width:8.0px;text-align:center;top:11.4px;color:#b0a878;font-size:6.3px'>é</div>
<div class='t' style='left:39.9px;width:8.0px;text-align:center;top:11.4px;color:#b0a878;font-size:6.3px'>S</div>
<div class='t' style='left:47.9px;width:8.0px;text-align:center;top:11.4px;color:#b0a878;font-size:6.3px'>ù</div>
<div class='t' style='left:55.9px;width:8.0px;text-align:center;top:11.4px;color:#b0a878;font-size:6.3px'>ÿ</div>
<div class='t' style='left:63.9px;width:8.0px;text-align:center;top:11.4px;color:#b0a878;font-size:6.3px'>ÿ</div>
<div class='t' style='left:71.9px;width:8.0px;text-align:center;top:11.4px;color:#b0a878;font-size:6.3px'>.</div>
<div class='t' style='left:79.9px;width:8.0px;text-align:center;top:11.4px;color:#b0a878;font-size:6.3px'>.</div>
<div class='t' style='left:87.9px;width:8.0px;text-align:center;top:11.4px;color:#b0a878;font-size:6.3px'>.</div>
<div class='t' style='left:95.9px;width:8.0px;text-align:center;top:11.4px;color:#b0a878;font-size:6.3px'>.</div>
<div class='t' style='left:103.9px;width:8.0px;text-align:center;top:11.4px;color:#b0a878;font-size:6.3px'>Ê</div>
<div class='t' style='left:111.9px;width:8.0px;text-align:center;top:11.4px;color:#b0a878;font-size:6.3px'>"</div>
<div class='t' style='left:119.9px;width:8.0px;text-align:center;top:11.4px;color:#b0a878;font-size:6.3px'>.</div>
<div class='t' style='left:-0.1px;width:8.0px;text-align:center;top:20.4px;color:#b0a878;font-size:6.3px'>j</div>
<div class='t' style='left:7.9px;width:8.0px;text-align:center;top:20.4px;color:#b0a878;font-size:6.3px'>ö</div>
<div class='a' style='left:16.5px;top:21.0px;width:8.9px;height:9.0px;background:#3a62c0'></div>
<div class='t' style='left:15.9px;width:8.0px;text-align:center;top:20.4px;color:#d0c68c;font-size:6.3px'>t</div>
<div class='a' style='left:25.4px;top:21.0px;width:8.0px;height:9.0px;background:#3a62c0'></div>
<div class='t' style='left:23.9px;width:8.0px;text-align:center;top:20.4px;color:#d0c68c;font-size:6.3px'>`</div>
<div class='t' style='left:31.9px;width:8.0px;text-align:center;top:20.4px;color:#b0a878;font-size:6.3px'>¿</div>
<div class='t' style='left:39.9px;width:8.0px;text-align:center;top:20.4px;color:#b0a878;font-size:6.3px'>.</div>
<div class='t' style='left:47.9px;width:8.0px;text-align:center;top:20.4px;color:#b0a878;font-size:6.3px'>A</div>
<div class='t' style='left:55.9px;width:8.0px;text-align:center;top:20.4px;color:#b0a878;font-size:6.3px'>&lt;</div>
<div class='t' style='left:63.9px;width:8.0px;text-align:center;top:20.4px;color:#b0a878;font-size:6.3px'>:</div>
<div class='t' style='left:71.9px;width:8.0px;text-align:center;top:20.4px;color:#b0a878;font-size:6.3px'>¢</div>
<div class='t' style='left:79.9px;width:8.0px;text-align:center;top:20.4px;color:#b0a878;font-size:6.3px'>.</div>
<div class='t' style='left:87.9px;width:8.0px;text-align:center;top:20.4px;color:#b0a878;font-size:6.3px'>ä</div>
<div class='t' style='left:95.9px;width:8.0px;text-align:center;top:20.4px;color:#b0a878;font-size:6.3px'>.</div>
<div class='t' style='left:103.9px;width:8.0px;text-align:center;top:20.4px;color:#b0a878;font-size:6.3px'>.</div>
<div class='t' style='left:111.9px;width:8.0px;text-align:center;top:20.4px;color:#b0a878;font-size:6.3px'>.</div>
<div class='t' style='left:119.9px;width:8.0px;text-align:center;top:20.4px;color:#b0a878;font-size:6.3px'>.</div>
<div class='t' style='left:-0.1px;width:8.0px;text-align:center;top:30.4px;color:#b0a878;font-size:6.3px'>.</div>
<div class='t' style='left:7.9px;width:8.0px;text-align:center;top:30.4px;color:#b0a878;font-size:6.3px'>#</div>
<div class='t' style='left:15.9px;width:8.0px;text-align:center;top:30.4px;color:#b0a878;font-size:6.3px'>.</div>
<div class='t' style='left:23.9px;width:8.0px;text-align:center;top:30.4px;color:#b0a878;font-size:6.3px'>.</div>
<div class='t' style='left:31.9px;width:8.0px;text-align:center;top:30.4px;color:#b0a878;font-size:6.3px'>D</div>
<div class='t' style='left:39.9px;width:8.0px;text-align:center;top:30.4px;color:#b0a878;font-size:6.3px'>n</div>
<div class='t' style='left:47.9px;width:8.0px;text-align:center;top:30.4px;color:#b0a878;font-size:6.3px'>n</div>
<div class='t' style='left:55.9px;width:8.0px;text-align:center;top:30.4px;color:#b0a878;font-size:6.3px'>Ü</div>
<div class='t' style='left:63.9px;width:8.0px;text-align:center;top:30.4px;color:#b0a878;font-size:6.3px'>2</div>
<div class='t' style='left:71.9px;width:8.0px;text-align:center;top:30.4px;color:#b0a878;font-size:6.3px'>,</div>
<div class='t' style='left:79.9px;width:8.0px;text-align:center;top:30.4px;color:#b0a878;font-size:6.3px'>°</div>
<div class='t' style='left:87.9px;width:8.0px;text-align:center;top:30.4px;color:#b0a878;font-size:6.3px'>7</div>
<div class='t' style='left:95.9px;width:8.0px;text-align:center;top:30.4px;color:#b0a878;font-size:6.3px'>p</div>
<div class='t' style='left:103.9px;width:8.0px;text-align:center;top:30.4px;color:#b0a878;font-size:6.3px'>.</div>
<div class='t' style='left:111.9px;width:8.0px;text-align:center;top:30.4px;color:#b0a878;font-size:6.3px'>@</div>
<div class='t' style='left:119.9px;width:8.0px;text-align:center;top:30.4px;color:#b0a878;font-size:6.3px'>3</div>
<div class='t' style='left:-0.1px;width:8.0px;text-align:center;top:40.4px;color:#b0a878;font-size:6.3px'>r</div>
<div class='t' style='left:7.9px;width:8.0px;text-align:center;top:40.4px;color:#b0a878;font-size:6.3px'>2</div>
<div class='t' style='left:15.9px;width:8.0px;text-align:center;top:40.4px;color:#b0a878;font-size:6.3px'>ó</div>
<div class='t' style='left:23.9px;width:8.0px;text-align:center;top:40.4px;color:#b0a878;font-size:6.3px'>.</div>
<div class='t' style='left:31.9px;width:8.0px;text-align:center;top:40.4px;color:#b0a878;font-size:6.3px'>À</div>
<div class='t' style='left:39.9px;width:8.0px;text-align:center;top:40.4px;color:#b0a878;font-size:6.3px'>.</div>
<div class='t' style='left:47.9px;width:8.0px;text-align:center;top:40.4px;color:#b0a878;font-size:6.3px'>à</div>
<div class='t' style='left:55.9px;width:8.0px;text-align:center;top:40.4px;color:#b0a878;font-size:6.3px'>.</div>
<div class='t' style='left:63.9px;width:8.0px;text-align:center;top:40.4px;color:#b0a878;font-size:6.3px'>U</div>
<div class='t' style='left:71.9px;width:8.0px;text-align:center;top:40.4px;color:#b0a878;font-size:6.3px'>x</div>
<div class='t' style='left:79.9px;width:8.0px;text-align:center;top:40.4px;color:#b0a878;font-size:6.3px'>.</div>
<div class='t' style='left:87.9px;width:8.0px;text-align:center;top:40.4px;color:#b0a878;font-size:6.3px'>H</div>
<div class='t' style='left:95.9px;width:8.0px;text-align:center;top:40.4px;color:#b0a878;font-size:6.3px'>a</div>
<div class='t' style='left:103.9px;width:8.0px;text-align:center;top:40.4px;color:#b0a878;font-size:6.3px'>.</div>
<div class='t' style='left:111.9px;width:8.0px;text-align:center;top:40.4px;color:#b0a878;font-size:6.3px'>.</div>
<div class='t' style='left:119.9px;width:8.0px;text-align:center;top:40.4px;color:#b0a878;font-size:6.3px'>.</div>
<div class='t' style='left:-0.1px;width:8.0px;text-align:center;top:49.4px;color:#b0a878;font-size:6.3px'>.</div>
<div class='t' style='left:7.9px;width:8.0px;text-align:center;top:49.4px;color:#b0a878;font-size:6.3px'>.</div>
<div class='t' style='left:15.9px;width:8.0px;text-align:center;top:49.4px;color:#b0a878;font-size:6.3px'>0</div>
<div class='t' style='left:23.9px;width:8.0px;text-align:center;top:49.4px;color:#b0a878;font-size:6.3px'>P</div>
<div class='t' style='left:31.9px;width:8.0px;text-align:center;top:49.4px;color:#b0a878;font-size:6.3px'>u</div>
<div class='t' style='left:39.9px;width:8.0px;text-align:center;top:49.4px;color:#b0a878;font-size:6.3px'>ÿ</div>
<div class='t' style='left:47.9px;width:8.0px;text-align:center;top:49.4px;color:#b0a878;font-size:6.3px'>.</div>
<div class='t' style='left:55.9px;width:8.0px;text-align:center;top:49.4px;color:#b0a878;font-size:6.3px'>\</div>
<div class='t' style='left:63.9px;width:8.0px;text-align:center;top:49.4px;color:#b0a878;font-size:6.3px'>.</div>
<div class='t' style='left:71.9px;width:8.0px;text-align:center;top:49.4px;color:#b0a878;font-size:6.3px'>.</div>
<div class='t' style='left:79.9px;width:8.0px;text-align:center;top:49.4px;color:#b0a878;font-size:6.3px'>ò</div>
<div class='t' style='left:87.9px;width:8.0px;text-align:center;top:49.4px;color:#b0a878;font-size:6.3px'>.</div>
<div class='t' style='left:95.9px;width:8.0px;text-align:center;top:49.4px;color:#b0a878;font-size:6.3px'>.</div>
<div class='t' style='left:103.9px;width:8.0px;text-align:center;top:49.4px;color:#b0a878;font-size:6.3px'>.</div>
<div class='t' style='left:111.9px;width:8.0px;text-align:center;top:49.4px;color:#b0a878;font-size:6.3px'>[</div>
<div class='t' style='left:119.9px;width:8.0px;text-align:center;top:49.4px;color:#b0a878;font-size:6.3px'>.</div>
</div>
<div class='a' style='left:666.6px;top:47.1px;width:6.8px;height:54.4px;background:#e9e9e9'></div>
<div class='a' style='left:667.2px;top:54.0px;width:5.9px;height:17.4px;background:linear-gradient(90deg,#dcdcdc,#cacaca 40%,#b2b2b2);border:0.5px solid #9e9e9e;border-radius:3px'></div>
<svg class='a' style='left:668.2px;top:48.8px' width='3.6' height='3' viewBox='0 0 4 3'><path d='M0 3L2 0L4 3z' fill='#a9a9a9'/></svg>
<svg class='a' style='left:668.2px;top:96.6px' width='3.6' height='3' viewBox='0 0 4 3'><path d='M0 0L2 3L4 0z' fill='#333'/></svg>
<div class='a' style='left:186.6px;top:122.6px;width:486.8px;height:95.4px;background:#d8d8d8;border:0.6px solid #bdbdbd;border-bottom:none;border-radius:1.5px'></div>
<div class='a' style='left:186.8px;top:108.0px;width:475.8px;height:14.8px;background:linear-gradient(#dedede,#d8d8d8);border:0.6px solid #c2c2c2;border-bottom:none;border-radius:1.5px 1.5px 0 0'></div>
<div class='a' style='left:238.9px;top:108.4px;width:0.6px;height:14.0px;background:#c0c0c0'></div>
<div class='a' style='left:239.5px;top:108.4px;width:0.6px;height:14.0px;background:#e6e6e6'></div>
<div class='t ' style='left:189.7px;top:111px;'>Disasm: .text</div>
<div class='a' style='left:273.7px;top:108.4px;width:0.6px;height:14.0px;background:#c0c0c0'></div>
<div class='a' style='left:274.3px;top:108.4px;width:0.6px;height:14.0px;background:#e6e6e6'></div>
<div class='t ' style='left:242.4px;top:111px;'>General</div>
<div class='a' style='left:312.4px;top:108.4px;width:0.6px;height:14.0px;background:#c0c0c0'></div>
<div class='a' style='left:313.0px;top:108.4px;width:0.6px;height:14.0px;background:#e6e6e6'></div>
<div class='t ' style='left:277.2px;top:111px;'>DOS Hdr</div>
<div class='a' style='left:348.0px;top:108.4px;width:0.6px;height:14.0px;background:#c0c0c0'></div>
<div class='a' style='left:348.6px;top:108.4px;width:0.6px;height:14.0px;background:#e6e6e6'></div>
<div class='t ' style='left:315.9px;top:111px;'>File Hdr</div>
<div class='a' style='left:399.8px;top:108.4px;width:0.6px;height:14.0px;background:#c0c0c0'></div>
<div class='a' style='left:400.4px;top:108.4px;width:0.6px;height:14.0px;background:#e6e6e6'></div>
<div class='t ' style='left:351.5px;top:111px;'>Optional Hdr</div>
<div class='a' style='left:500.6px;top:108.4px;width:0.6px;height:14.0px;background:#c0c0c0'></div>
<div class='a' style='left:501.2px;top:108.4px;width:0.6px;height:14.0px;background:#e6e6e6'></div>
<svg class='a' style='left:457.4px;top:112px' width='8' height='6' viewBox='0 0 8 6'><path d='M0.2 0.6h2.6l0.8 0.9h4.2v4.3h-7.6z' fill='#8f8f8f'/></svg>
<div class='t ' style='left:469.8px;top:111px;'>Imports</div>
<div class='a' style='left:558.0px;top:108.4px;width:0.6px;height:14.0px;background:#c0c0c0'></div>
<div class='a' style='left:558.6px;top:108.4px;width:0.6px;height:14.0px;background:#e6e6e6'></div>
<svg class='a' style='left:505.8px;top:112px' width='8' height='6' viewBox='0 0 8 6'><path d='M0.2 0.6h2.6l0.8 0.9h4.2v4.3h-7.6z' fill='#8f8f8f'/></svg>
<div class='t ' style='left:518.2px;top:111px;'>Resources</div>
<div class='a' style='left:617.4px;top:108.4px;width:0.6px;height:14.0px;background:#c0c0c0'></div>
<div class='a' style='left:618.0px;top:108.4px;width:0.6px;height:14.0px;background:#e6e6e6'></div>
<svg class='a' style='left:563.2px;top:112px' width='8' height='6' viewBox='0 0 8 6'><path d='M0.2 0.6h2.6l0.8 0.9h4.2v4.3h-7.6z' fill='#8f8f8f'/></svg>
<div class='t ' style='left:575.6px;top:111px;'>BaseReloc.</div>
<div class='a' style='left:662.0px;top:108.4px;width:0.6px;height:14.0px;background:#c0c0c0'></div>
<div class='a' style='left:662.6px;top:108.4px;width:0.6px;height:14.0px;background:#e6e6e6'></div>
<svg class='a' style='left:622.6px;top:112px' width='8' height='6' viewBox='0 0 8 6'><path d='M0.2 0.6h2.6l0.8 0.9h4.2v4.3h-7.6z' fill='#8f8f8f'/></svg>
<div class='t ' style='left:635.0px;top:111px;'>Debug</div>
<div class='a' style='left:400.6px;top:105.6px;width:52.0px;height:18.2px;background:#ececec;border:0.6px solid #bdbdbd;border-bottom:none;border-radius:2px 2px 0 0'></div>
<div class='a' style='left:402.4px;top:108.0px;width:48.6px;height:13.6px;background:#cfe2f4;border:0.7px solid #6aa5dc;border-radius:1.5px'></div>
<div class='t ' style='left:404.6px;top:110px;color:#1a1a1a'>Section Hdrs</div>
<svg class='a' style='left:193.6px;top:125.4px' width='8' height='8' viewBox='0 0 8 8'><path d='M4 0.6v6.8M0.6 4h6.8' stroke='#111' stroke-width='1.5'/></svg>
<svg class='a' style='left:213px;top:125.6px' width='8' height='7.6' viewBox='0 0 8 8'><path d='M0.6 3V0.6H3M5 0.6h2.4V3M7.4 5v2.4H5M3 7.4H0.6V5' stroke='#111' stroke-width='1.3' fill='none'/><path d='M2 2l1.3 1.3M6 2L4.7 3.3M6 6L4.7 4.7M2 6l1.3-1.3' stroke='#111' stroke-width='0.9'/></svg>
<div class='a' style='left:428.6px;top:136.0px;width:1.0px;height:1.0px;background:#aaa'></div>
<div class='a' style='left:430.6px;top:136.0px;width:1.0px;height:1.0px;background:#aaa'></div>
<div class='a' style='left:187.2px;top:138.4px;width:485.0px;height:79.0px;background:#fff'></div>
<div class='a' style='left:187.2px;top:138.4px;width:485.0px;height:15.2px;background:linear-gradient(#e9e9e9,#dbdbdb);border-bottom:0.6px solid #c8c8c8'></div>
<div class='t ' style='left:189.6px;top:142px;color:#222'>Name</div>
<div class='a' style='left:239.9px;top:138.8px;width:0.6px;height:14.4px;background:#c4c4c4'></div>
<div class='t ' style='left:242.6px;top:142px;color:#222'>Raw Addr.</div>
<div class='a' style='left:280.7px;top:138.8px;width:0.6px;height:14.4px;background:#c4c4c4'></div>
<div class='t ' style='left:283.4px;top:142px;color:#222'>Raw size</div>
<div class='a' style='left:316.1px;top:138.8px;width:0.6px;height:14.4px;background:#c4c4c4'></div>
<div class='t ' style='left:318.8px;top:142px;color:#222'>Virtual Addr.</div>
<div class='a' style='left:366.3px;top:138.8px;width:0.6px;height:14.4px;background:#c4c4c4'></div>
<div class='t ' style='left:369.0px;top:142px;color:#222'>Virtual Size</div>
<div class='a' style='left:411.7px;top:138.8px;width:0.6px;height:14.4px;background:#c4c4c4'></div>
<div class='t ' style='left:414.4px;top:142px;color:#222'>Characteristics</div>
<div class='a' style='left:469.1px;top:138.8px;width:0.6px;height:14.4px;background:#c4c4c4'></div>
<div class='t ' style='left:471.8px;top:142px;color:#222'>Ptr to Reloc.</div>
<div class='a' style='left:517.2px;top:138.8px;width:0.6px;height:14.4px;background:#c4c4c4'></div>
<div class='t ' style='left:519.9px;top:142px;color:#222'>Num. of Reloc.</div>
<div class='a' style='left:573.2px;top:138.8px;width:0.6px;height:14.4px;background:#c4c4c4'></div>
<div class='t ' style='left:575.9px;top:142px;color:#222'>Num. of Linenum.</div>
<svg class='a' style='left:193.4px;top:157.9px' width='3.4' height='4.4' viewBox='0 0 3.4 4.4'><path d='M0.2 0.2L3.2 2.2L0.2 4.2z' fill='#222'/></svg>
<div class='t ' style='left:200.0px;top:156px;color:#222;font-size:8px;letter-spacing:0.3px'>.text</div>
<div class='t ' style='left:242.8px;top:156px;color:#0a7a0a;font-size:8px'>400</div>
<div class='t ' style='left:283.2px;top:156px;color:#222;font-size:7.8px'>DE00</div>
<div class='t ' style='left:318.8px;top:156px;color:#1414e6;font-size:8px'>1000</div>
<div class='t ' style='left:368.0px;top:156px;color:#222;font-size:7.8px'>DC46</div>
<div class='t ' style='left:413.8px;top:156px;color:#222;font-size:8px'>60000020</div>
<div class='t ' style='left:471.6px;top:156px;color:#222;font-size:8px'>0</div>
<div class='t ' style='left:519.4px;top:156px;color:#222;font-size:8px'>0</div>
<div class='t ' style='left:575.6px;top:156px;color:#222;font-size:8px'>0</div>
<div class='a' style='left:187.2px;top:166.2px;width:485.0px;height:12.2px;background:#f6f6f6'></div>
<svg class='a' style='left:193.4px;top:170.2px' width='3.4' height='4.4' viewBox='0 0 3.4 4.4'><path d='M0.2 0.2L3.2 2.2L0.2 4.2z' fill='#222'/></svg>
<div class='t ' style='left:200.0px;top:168px;color:#222;font-size:8px'>.rdata</div>
<div class='t ' style='left:242.8px;top:168px;color:#0a7a0a;font-size:8px'>E200</div>
<div class='t ' style='left:283.2px;top:168px;color:#222;font-size:7.8px'>6A00</div>
<div class='t ' style='left:318.8px;top:168px;color:#1414e6;font-size:8px'>F000</div>
<div class='t ' style='left:368.0px;top:168px;color:#222;font-size:7.8px'>68BC</div>
<div class='t ' style='left:413.8px;top:168px;color:#222;font-size:8px'>40000040</div>
<div class='t ' style='left:471.6px;top:168px;color:#222;font-size:8px'>0</div>
<div class='t ' style='left:519.4px;top:168px;color:#222;font-size:8px'>0</div>
<div class='t ' style='left:575.6px;top:168px;color:#222;font-size:8px'>0</div>
<svg class='a' style='left:193.4px;top:182.4px' width='3.4' height='4.4' viewBox='0 0 3.4 4.4'><path d='M0.2 0.2L3.2 2.2L0.2 4.2z' fill='#222'/></svg>
<div class='t ' style='left:200.0px;top:180px;color:#222;font-size:8px'>.data</div>
<div class='t ' style='left:242.8px;top:180px;color:#0a7a0a;font-size:8px'>14C00</div>
<div class='t ' style='left:283.2px;top:180px;color:#222;font-size:7.8px'>1800</div>
<div class='t ' style='left:318.8px;top:180px;color:#1414e6;font-size:8px'>16000</div>
<div class='t ' style='left:368.0px;top:180px;color:#222;font-size:7.8px'>2874</div>
<div class='t ' style='left:413.8px;top:180px;color:#222;font-size:8px'>C0000040</div>
<div class='t ' style='left:471.6px;top:180px;color:#222;font-size:8px'>0</div>
<div class='t ' style='left:519.4px;top:180px;color:#222;font-size:8px'>0</div>
<div class='t ' style='left:575.6px;top:180px;color:#222;font-size:8px'>0</div>
<div class='a' style='left:187.2px;top:190.7px;width:485.0px;height:12.2px;background:#f6f6f6'></div>
<svg class='a' style='left:193.4px;top:194.7px' width='3.4' height='4.4' viewBox='0 0 3.4 4.4'><path d='M0.2 0.2L3.2 2.2L0.2 4.2z' fill='#222'/></svg>
<div class='t ' style='left:200.0px;top:192px;color:#222;font-size:8px'>.rsrc</div>
<div class='t ' style='left:242.8px;top:192px;color:#0a7a0a;font-size:8px'>16400</div>
<div class='t ' style='left:283.2px;top:192px;color:#222;font-size:7.8px'>18000</div>
<div class='t ' style='left:318.8px;top:192px;color:#1414e6;font-size:8px'>19000</div>
<div class='t ' style='left:368.0px;top:192px;color:#222;font-size:7.8px'>17E38</div>
<div class='t ' style='left:413.8px;top:192px;color:#222;font-size:8px'>40000040</div>
<div class='t ' style='left:471.6px;top:192px;color:#222;font-size:8px'>0</div>
<div class='t ' style='left:519.4px;top:192px;color:#222;font-size:8px'>0</div>
<div class='t ' style='left:575.6px;top:192px;color:#222;font-size:8px'>0</div>
<svg class='a' style='left:193.4px;top:206.9px' width='3.4' height='4.4' viewBox='0 0 3.4 4.4'><path d='M0.2 0.2L3.2 2.2L0.2 4.2z' fill='#222'/></svg>
<div class='t ' style='left:200.0px;top:205px;color:#222;font-size:8px'>.reloc</div>
<div class='t ' style='left:242.8px;top:205px;color:#0a7a0a;font-size:8px'>2E400</div>
<div class='t ' style='left:283.2px;top:205px;color:#222;font-size:7.8px'>1400</div>
<div class='t ' style='left:318.8px;top:205px;color:#1414e6;font-size:8px'>31000</div>
<div class='t ' style='left:368.0px;top:205px;color:#222;font-size:7.8px'>12E4</div>
<div class='t ' style='left:413.8px;top:205px;color:#222;font-size:8px'>42000040</div>
<div class='t ' style='left:471.6px;top:205px;color:#222;font-size:8px'>0</div>
<div class='t ' style='left:519.4px;top:205px;color:#222;font-size:8px'>0</div>
<div class='t ' style='left:575.6px;top:205px;color:#222;font-size:8px'>0</div>
<div class='t ' style='left:188.2px;top:223px;color:#222'>Raw</div>
<div class='t ' style='left:432.8px;top:223px;color:#222'>Virtual</div>
<svg class='a' style='left:411.8px;top:223.9px' width='6.2' height='7' viewBox='0 0 6.2 7'><rect x='0.45' y='0.45' width='5.3' height='6.1' rx='1.3' fill='#b4b4b4' stroke='#808080' stroke-width='0.8'/><path d='M1.7 5.2L4.5 1.8M3 1.7h1.6v1.6' stroke='#e2e2e2' stroke-width='0.7' fill='none'/></svg>
<svg class='a' style='left:421.1px;top:223.9px' width='6.2' height='7' viewBox='0 0 6.2 7'><rect x='0.45' y='0.45' width='5.3' height='6.1' rx='1.3' fill='#dcdcdc' stroke='#7c7c7c' stroke-width='0.8'/><path d='M1.8 2.1L4.4 4.9M4.4 2.1L1.8 4.9' stroke='#4a4a4a' stroke-width='0.95'/></svg>
<svg class='a' style='left:656.2px;top:223.9px' width='6.2' height='7' viewBox='0 0 6.2 7'><rect x='0.45' y='0.45' width='5.3' height='6.1' rx='1.3' fill='#b4b4b4' stroke='#808080' stroke-width='0.8'/><path d='M1.7 5.2L4.5 1.8M3 1.7h1.6v1.6' stroke='#e2e2e2' stroke-width='0.7' fill='none'/></svg>
<svg class='a' style='left:665.5px;top:223.9px' width='6.2' height='7' viewBox='0 0 6.2 7'><rect x='0.45' y='0.45' width='5.3' height='6.1' rx='1.3' fill='#dcdcdc' stroke='#7c7c7c' stroke-width='0.8'/><path d='M1.8 2.1L4.4 4.9M4.4 2.1L1.8 4.9' stroke='#4a4a4a' stroke-width='0.95'/></svg>
<div class='a' style='left:187.2px;top:233.6px;width:242.2px;height:156.0px;background:#e6e6fa'></div>
<div class='a' style='left:431.6px;top:233.6px;width:241.8px;height:156.0px;background:#e6e6fa'></div>
<div class='a' style='left:429.4px;top:233.6px;width:2.2px;height:156.0px;background:#cfcfcf'></div>
<div class='a' style='left:429.6px;top:218.4px;width:0.6px;height:1.6px;background:#b0b0b0'></div>
<div class='a' style='left:430.8px;top:218.4px;width:0.6px;height:1.6px;background:#b0b0b0'></div>
<svg class='a' style='left:187.2px;top:239.0px' width='242.2' height='1' viewBox='0 0 242.2 1'><path d='M0 0.5H242.2' stroke='#222' stroke-width='0.9' stroke-dasharray='2 1.6'/></svg>
<div class='a' style='left:215.8px;top:239.5px;width:186.0px;height:42.5px;background:#8b8bfb;border-left:0.7px solid #3c3ca8;border-right:0.7px solid #3c3ca8'></div>
<div class='a' style='left:215.8px;top:239.2px;width:186.0px;height:0.6px;background:rgba(30,30,70,0.6)'></div>
<div class='a' style='left:215.8px;top:282.0px;width:186.0px;height:19.8px;background:#f2f29a;border-left:0.7px solid #a8a850;border-right:0.7px solid #a8a850'></div>
<div class='a' style='left:215.8px;top:281.7px;width:186.0px;height:0.6px;background:rgba(30,30,70,0.6)'></div>
<div class='a' style='left:215.8px;top:301.8px;width:186.0px;height:4.6px;background:#8eee8e;border-left:0.7px solid #3a9a3a;border-right:0.7px solid #3a9a3a'></div>
<div class='a' style='left:215.8px;top:301.5px;width:186.0px;height:0.6px;background:rgba(30,30,70,0.6)'></div>
<div class='a' style='left:215.8px;top:306.4px;width:186.0px;height:72.9px;background:#f29a9a;border-left:0.7px solid #b86868;border-right:0.7px solid #b86868'></div>
<div class='a' style='left:215.8px;top:306.1px;width:186.0px;height:0.6px;background:rgba(30,30,70,0.6)'></div>
<div class='a' style='left:215.8px;top:379.3px;width:186.0px;height:4.5px;background:#e07df0;border-left:0.7px solid #9a40aa;border-right:0.7px solid #9a40aa'></div>
<div class='a' style='left:215.8px;top:379.0px;width:186.0px;height:0.6px;background:rgba(30,30,70,0.6)'></div>
<div class='a' style='left:215.8px;top:239.1px;width:186.0px;height:0.9px;background:#1a1a1a'></div>
<div class='a' style='left:215.8px;top:383.3px;width:186.0px;height:0.9px;background:#222'></div>
<div class='a' style='left:187.2px;top:258.1px;width:242.2px;height:0.7px;background:#f0304a;opacity:.9'></div>
<div class='t ' style='left:190.2px;top:233px;font-size:8px;color:#000;letter-spacing:0.12px'>400</div>
<div class='t ' style='left:190.2px;top:275px;font-size:8px;color:#000;letter-spacing:0.12px'>E200</div>
<div class='t ' style='left:190.2px;top:295px;font-size:8px;color:#000;letter-spacing:0.12px'>14C00</div>
<div class='t ' style='left:190.2px;top:300px;font-size:8px;color:#000;letter-spacing:0.12px'>16400</div>
<div class='t ' style='left:190.2px;top:373px;font-size:8px;color:#000;letter-spacing:0.12px'>2E400</div>
<div class='t ' style='left:190.2px;top:251px;font-size:8px;color:#f01830;letter-spacing:0.12px'>632D</div>
<div class='t ' style='left:226.2px;top:239px;font-size:8px;color:#000;letter-spacing:0.25px'>[.text]</div>
<div class='t ' style='left:226.2px;top:280px;font-size:8px;color:#000;letter-spacing:0.02px'>[.rdata]</div>
<div class='t ' style='left:226.2px;top:300px;font-size:8px;color:#000;letter-spacing:0.02px'>[.data]</div>
<div class='t ' style='left:226.2px;top:305px;font-size:8px;color:#000;letter-spacing:0.02px'>[.rsrc]</div>
<div class='t ' style='left:226.2px;top:377px;font-size:8px;color:#000;letter-spacing:0.02px'>[.reloc]</div>
<svg class='a' style='left:431.6px;top:239.0px' width='241.79999999999995' height='1' viewBox='0 0 241.79999999999995 1'><path d='M0 0.5H241.79999999999995' stroke='#222' stroke-width='0.9' stroke-dasharray='2 1.6'/></svg>
<div class='a' style='left:461.2px;top:239.5px;width:185.2px;height:3.1px;background:#f4f4fc;border-left:0.7px solid #8a8a9a;border-right:0.7px solid #8a8a9a'></div>
<div class='a' style='left:461.2px;top:239.2px;width:185.2px;height:0.6px;background:rgba(30,30,70,0.6)'></div>
<div class='a' style='left:461.2px;top:242.6px;width:185.2px;height:38.9px;background:#8b8bfb;border-left:0.7px solid #3c3ca8;border-right:0.7px solid #3c3ca8'></div>
<div class='a' style='left:461.2px;top:242.3px;width:185.2px;height:0.6px;background:rgba(30,30,70,0.6)'></div>
<div class='a' style='left:461.2px;top:281.5px;width:185.2px;height:20.0px;background:#f2f29a;border-left:0.7px solid #a8a850;border-right:0.7px solid #a8a850'></div>
<div class='a' style='left:461.2px;top:281.2px;width:185.2px;height:0.6px;background:rgba(30,30,70,0.6)'></div>
<div class='a' style='left:461.2px;top:301.5px;width:185.2px;height:4.1px;background:#8eee8e;border-left:0.7px solid #3a9a3a;border-right:0.7px solid #3a9a3a'></div>
<div class='a' style='left:461.2px;top:301.2px;width:185.2px;height:0.6px;background:rgba(30,30,70,0.6)'></div>
<div class='a' style='left:461.2px;top:305.6px;width:185.2px;height:3.8px;background:#f4f4fc;border-left:0.7px solid #8a8a9a;border-right:0.7px solid #8a8a9a'></div>
<div class='a' style='left:461.2px;top:305.3px;width:185.2px;height:0.6px;background:rgba(30,30,70,0.6)'></div>
<div class='a' style='left:461.2px;top:309.4px;width:185.2px;height:68.2px;background:#f29a9a;border-left:0.7px solid #b86868;border-right:0.7px solid #b86868'></div>
<div class='a' style='left:461.2px;top:309.1px;width:185.2px;height:0.6px;background:rgba(30,30,70,0.6)'></div>
<div class='a' style='left:461.2px;top:377.6px;width:185.2px;height:3.4px;background:#e07df0;border-left:0.7px solid #9a40aa;border-right:0.7px solid #9a40aa'></div>
<div class='a' style='left:461.2px;top:377.3px;width:185.2px;height:0.6px;background:rgba(30,30,70,0.6)'></div>
<div class='a' style='left:461.2px;top:381.0px;width:185.2px;height:2.6px;background:#f4f4fc;border-left:0.7px solid #8a8a9a;border-right:0.7px solid #8a8a9a'></div>
<div class='a' style='left:461.2px;top:380.7px;width:185.2px;height:0.6px;background:rgba(30,30,70,0.6)'></div>
<div class='a' style='left:461.2px;top:239.1px;width:185.2px;height:0.9px;background:#1a1a1a'></div>
<div class='a' style='left:461.2px;top:383.1px;width:185.2px;height:0.9px;background:#222'></div>
<div class='a' style='left:431.6px;top:258.1px;width:241.8px;height:0.7px;background:#f0304a;opacity:.9'></div>
<div class='t ' style='left:434.8px;top:235px;font-size:8px;color:#000;letter-spacing:0.12px'>1000</div>
<div class='t ' style='left:434.8px;top:275px;font-size:8px;color:#000;letter-spacing:0.12px'>F000</div>
<div class='t ' style='left:434.8px;top:294px;font-size:8px;color:#000;letter-spacing:0.12px'>16000</div>
<div class='t ' style='left:434.8px;top:302px;font-size:8px;color:#000;letter-spacing:0.12px'>19000</div>
<div class='t ' style='left:434.8px;top:371px;font-size:8px;color:#000;letter-spacing:0.12px'>31000</div>
<div class='t ' style='left:434.8px;top:251px;font-size:8px;color:#f01830;letter-spacing:0.12px'>6F2D</div>
<div class='t ' style='left:471.2px;top:240px;font-size:8px;color:#000;letter-spacing:0.25px'>[.text]</div>
<div class='t ' style='left:471.2px;top:279px;font-size:8px;color:#000;letter-spacing:0.02px'>[.rdata]</div>
<div class='t ' style='left:471.2px;top:299px;font-size:8px;color:#000;letter-spacing:0.02px'>[.data]</div>
<div class='t ' style='left:471.2px;top:308px;font-size:8px;color:#000;letter-spacing:0.02px'>[.rsrc]</div>
<div class='t ' style='left:471.2px;top:376px;font-size:8px;color:#000;letter-spacing:0.02px'>[.reloc]</div>
<div class='t' style='left:174.3px;top:388px;transform-origin:0 0;transform:rotate(-90deg);color:#222;font-size:7.9px'>locky_25Feb</div>
<div class='a' style='left:187.2px;top:389.6px;width:486.2px;height:0.7px;background:#b4b4b4'></div>
<div class='a' style='left:173.4px;top:390.4px;width:42.0px;height:15.6px;background:#dadada;border:0.6px solid #cbcbcb;border-top:none;border-radius:0 0 1.5px 1.5px'></div>
<div class='t ' style='left:176.8px;top:395px;color:#222'>Locky.exe</div>
<div class='a' style='left:215.6px;top:390.0px;width:51.4px;height:18.0px;background:#fcfcfc;border-radius:0 0 2px 2px;box-shadow:0 0 0.6px #aaa'></div>
<div class='t ' style='left:219.0px;top:395px;color:#222'>locky_25Feb</div>
<div class='a' style='left:53.0px;top:408.2px;width:647.0px;height:0.7px;background:#c4c4c4'></div>
<div class='a' style='left:53.0px;top:421.8px;width:647.0px;height:1.2px;background:#8e8e8e'></div>
<div class='t ' style='left:614.4px;top:412px;color:#1616e2'><u>Opinions? Requests?</u></div>
<div class='a' style='left:676.3px;top:31.5px;width:23.3px;height:359.0px;background:#000;border-left:0.7px solid #f4f4f4;border-top:0.8px solid #f4f4f4'></div>
<div class='a' style='left:699.2px;top:32.0px;width:0.8px;height:358.0px;background:#606060'></div>
<div class='a' style='left:684.0px;top:39.0px;width:9.0px;height:101.0px;background:linear-gradient(90deg,#00005e,#000072 60%,#0c0c96);border:1px solid #3a3a9c;border-bottom:none'></div>
<div class='a' style='left:684.0px;top:140.0px;width:9.0px;height:50.0px;background:#6c6c08;border:1px solid #a4a41c;border-bottom:none'></div>
<div class='a' style='left:684.0px;top:190.0px;width:9.0px;height:11.0px;background:#0a6a0a;border:1px solid #22a222;border-bottom:none'></div>
<div class='a' style='left:684.0px;top:201.0px;width:9.0px;height:174.0px;background:#660c04;border:1px solid #98281c;border-bottom:none'></div>
<div class='a' style='left:684.0px;top:375.0px;width:9.0px;height:10.0px;background:#54047a;border:1px solid #7c34a8;border-bottom:none'></div>
<div class='a' style='left:683.8px;top:39.2px;width:9.4px;height:0.8px;background:#7c7ce0'></div>
<svg class='a' style='left:677px;top:38.6px' width='22' height='1' viewBox='0 0 22 1'><path d='M0 0.5H22' stroke='#c4c4c4' stroke-width='0.8' stroke-dasharray='1.3 1.2'/></svg>
<div class='a' style='left:677.6px;top:83.4px;width:22.0px;height:0.8px;background:#e00010'></div>
<div class='t ' style='left:679.3px;top:76px;font-size:8px;color:#f00010;letter-spacing:0.1px'>632D</div>
</body></html>
